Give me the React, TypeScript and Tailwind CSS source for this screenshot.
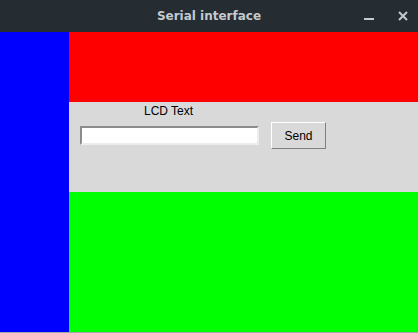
export default function App() {
  return (
    <div className="flex h-[333px] w-[418px] flex-col overflow-hidden bg-[#d9d9d9] font-['Liberation_Sans',Arial,sans-serif]">
      <div className="relative flex h-[32px] shrink-0 items-center justify-center bg-[#252c32]">
        <span className="font-['DejaVu_Sans',sans-serif] text-[12px] font-bold text-[#c3cad0]">
          Serial interface
        </span>
        <div className="absolute right-[10px] top-0 flex h-[32px] items-center gap-[24px]">
          <svg width="10" height="12" viewBox="0 0 10 12">
            <rect x="0" y="8" width="10" height="2" fill="#c3cad0" />
          </svg>
          <svg width="10" height="10" viewBox="0 0 10 10">
            <path d="M1 1 L9 9 M9 1 L1 9" stroke="#c3cad0" strokeWidth="2" />
          </svg>
        </div>
      </div>
      <div className="flex flex-1">
        <div className="w-[69px] shrink-0 bg-[#0000ff]" />
        <div className="flex flex-1 flex-col">
          <div className="h-[70px] bg-[#ff0000]" />
          <div className="flex h-[90px] flex-col bg-[#d9d9d9] pt-[2px]">
            <div className="ml-[75px] text-[12px] leading-[14px] text-black">LCD Text</div>
            <div className="mt-[4px] flex items-center">
              <input
                className="ml-[11px] h-[19px] w-[179px] border-2 border-b-[#ececec] border-l-[#8c8c8c] border-r-[#ececec] border-t-[#8c8c8c] bg-white outline-none"
                type="text"
              />
              <button className="ml-[12px] h-[27px] w-[55px] border border-b-[#808080] border-l-white border-r-[#808080] border-t-white bg-[#d9d9d9] text-[12px] text-black">
                Send
              </button>
            </div>
          </div>
          <div className="flex-1 bg-[#00ff00]" />
        </div>
      </div>
      <div className="h-[1px] shrink-0 bg-[#a6a6a6]" />
    </div>
  )
}
